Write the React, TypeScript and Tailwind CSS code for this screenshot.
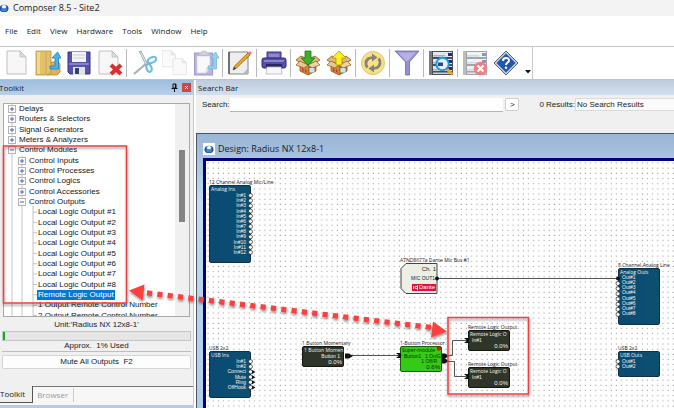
import type { ReactNode } from 'react';

const menus = ['File', 'Edit', 'View', 'Hardware', 'Tools', 'Window', 'Help'];

type TreeRow = { text: string; level: number; open?: boolean; selected?: boolean };

const treeRows: TreeRow[] = [
  { text: 'Delays', level: 0 },
  { text: 'Routers & Selectors', level: 0 },
  { text: 'Signal Generators', level: 0 },
  { text: 'Meters & Analyzers', level: 0 },
  { text: 'Control Modules', level: 0, open: true },
  { text: 'Control Inputs', level: 1 },
  { text: 'Control Processes', level: 1 },
  { text: 'Control Logics', level: 1 },
  { text: 'Control Accessories', level: 1 },
  { text: 'Control Outputs', level: 1, open: true },
  { text: 'Local Logic Output #1', level: 2 },
  { text: 'Local Logic Output #2', level: 2 },
  { text: 'Local Logic Output #3', level: 2 },
  { text: 'Local Logic Output #4', level: 2 },
  { text: 'Local Logic Output #5', level: 2 },
  { text: 'Local Logic Output #6', level: 2 },
  { text: 'Local Logic Output #7', level: 2 },
  { text: 'Local Logic Output #8', level: 2 },
  { text: 'Remote Logic Output', level: 2, selected: true },
  { text: '1 Output Remote Control Number', level: 2 },
  { text: '2 Output Remote Control Number', level: 2 },
];

const AppLogo = ({ className }: { className: string }) => (
  <svg viewBox="0 0 12 12" className={className} aria-hidden="true">
    <ellipse cx="6" cy="6.5" rx="5.4" ry="4.4" fill="#1d4f9c" />
    <ellipse cx="6" cy="7.6" rx="3.6" ry="2.6" fill="#3d83d6" />
    <ellipse cx="6" cy="4.4" rx="3" ry="2" fill="#dcebfa" />
    <rect x="5" y="2.6" width="2" height="3.4" fill="#fff" />
  </svg>
);

const Page = ({ x = 0, y = 0, s = 1 }: { x?: number; y?: number; s?: number }) => (
  <g transform={`translate(${x} ${y}) scale(${s})`}>
    <path d="M3 1h13l6 6v17H3z" fill="#f7f7f8" stroke="#b9b9bd" strokeWidth="0.9" />
    <path d="M16 1v6h6z" fill="#dcdce0" stroke="#b9b9bd" strokeWidth="0.7" />
  </g>
);

const Box = () => (
  <>
    <path d="M1 10l5-4 7 3 7-3 5 4-5 3H6z" fill="#e5b878" stroke="#8a5a22" strokeWidth="0.8" />
    <path d="M5 12l8 3 8-3v9l-8 4-8-4z" fill="#cf8a3c" stroke="#8a5a22" strokeWidth="0.8" />
    <path d="M13 15v10l8-4v-9z" fill="#b06c26" />
    <path d="M1 15l4-4 8 4-4 3z" fill="#eac893" stroke="#8a5a22" strokeWidth="0.7" />
    <path d="M25 15l-4-4-8 4 4 3z" fill="#f0d3a4" stroke="#8a5a22" strokeWidth="0.7" />
    <rect x="14.5" y="18" width="5" height="4.5" fill="#bfe7f6" />
    <path d="M7 18l1.500 1 0 3-1.500-1zM10 19l1.500 1 0 3-1.500-1z" fill="#e0301e" />
  </>
);

const Rack = ({ faded = false }: { faded?: boolean }) => (
  <g opacity={faded ? 0.5 : 1}>
    <rect x="1" y="1" width="24" height="24" fill="#4b4e55" />
    <rect x="1" y="1" width="3" height="24" fill="#777b82" />
    {[2, 9, 16].map((y) => (
      <g key={y}>
        <rect x="5" y={y} width="19" height="5" fill="#e2e6ee" />
        <rect x="5" y={y + 3} width="12" height="1.5" fill="#9fb4d4" />
        <rect x="20" y={y + 1} width="4" height="3" fill="#1c2c86" />
      </g>
    ))}
    <rect x="5" y="22.500" width="19" height="1.500" fill="#c9cdd4" />
  </g>
);

const UpArrow = () => (
  <path d="M15 16h5V8h-3l5.500-6L26 8h-2.500v11H15z" fill="#4cb2ea" stroke="#1f7fc0" strokeWidth="0.8" />
);

const tools: (null | { label: string; art: ReactNode })[] = [
  { label: 'New', art: <Page /> },
  {
    label: 'Open',
    art: (
      <>
        <path d="M15 12h8a3 3 0 0 1 2 3v7l-3 3H12z" fill="#dcb453" stroke="#a97f25" strokeWidth="0.7" />
        <path d="M1 1h15v22l-4 2H1z" fill="#e3c06a" stroke="#b08a35" strokeWidth="0.7" />
        <path d="M2 2h3v22H2z" fill="#efd894" />
        <path d="M11 2v22" stroke="#c59a3c" strokeWidth="0.7" />
        <UpArrow />
      </>
    ),
  },
  {
    label: 'Save',
    art: (
      <>
        <path d="M2 2h22v22H4l-2-2z" fill="#5953ac" stroke="#393386" strokeWidth="1" />
        <rect x="6" y="2" width="14" height="10" fill="#f4f6fb" />
        <path d="M7 5h12M7 8h12" stroke="#c4cbdd" />
        <rect x="3" y="13" width="20" height="2" fill="#8680d0" />
        <rect x="7" y="17" width="12" height="8" fill="#dfe4ea" />
        <rect x="9" y="18" width="4" height="6" fill="#34446a" />
      </>
    ),
  },
  {
    label: 'Delete',
    art: (
      <>
        <Page x={-1} />
        <path d="M14 15l10 9M24 15l-10 9" stroke="#d9302f" strokeWidth="4" />
      </>
    ),
  },
  null,
  {
    label: 'Cut',
    art: (
      <g fill="none">
        <path d="M3 24l14-12" stroke="#a3b3bb" strokeWidth="2.200" />
        <path d="M9 1l7 14" stroke="#8fa2ac" strokeWidth="2.600" />
        <path d="M9.500 2l6 12" stroke="#dce4e8" strokeWidth="1.200" />
        <ellipse cx="21" cy="10" rx="4.500" ry="2.600" transform="rotate(-25 21 10)" stroke="#70bbe6" strokeWidth="2" />
        <ellipse cx="18" cy="18" rx="2.500" ry="4" transform="rotate(-20 18 18)" stroke="#70bbe6" strokeWidth="2" />
      </g>
    ),
  },
  {
    label: 'Copy',
    art: (
      <g opacity="0.55">
        <Page x={-2} y={0} s={0.7} />
        <Page x={9} y={8} s={0.7} />
      </g>
    ),
  },
  {
    label: 'Paste',
    art: (
      <g opacity="0.6">
        <rect x="1.500" y="3" width="18" height="22" fill="#8d87c6" stroke="#625aa8" />
        <path d="M4 6h13v12l-4 5H4z" fill="#f6f6fb" stroke="#aaa5cf" strokeWidth="0.6" />
        <path d="M13 23v-5h4z" fill="#c9c9da" />
        <path d="M6 5V3h3V1h4v2h3v2z" fill="#b8b8c4" stroke="#8a8a9c" strokeWidth="0.6" />
        <UpArrow />
      </g>
    ),
  },
  null,
  {
    label: 'Properties',
    art: (
      <>
        <path d="M2 2h19v22H2z" fill="#eeeeef" stroke="#85868a" strokeWidth="1" />
        <path d="M2 24V2" stroke="#555" strokeWidth="1.500" />
        <path d="M16 24l5-6v6z" fill="#b5b6ba" />
        <path d="M6 20l1.500-4L21 3l2 2L9.500 18z" fill="#f2a91e" stroke="#7b4c10" strokeWidth="0.7" />
        <path d="M21 3l2-2 2 2-2 2z" fill="#e7798a" />
        <path d="M6 20l1.200-3 1.800 1.500z" fill="#333" />
      </>
    ),
  },
  null,
  {
    label: 'Print',
    art: (
      <>
        <path d="M6 2h14v7H6z" fill="#6e68ba" stroke="#37317f" />
        <rect x="8" y="4" width="10" height="3" fill="#8f8ad0" />
        <rect x="1" y="8" width="24" height="10" rx="2" fill="#554fa8" stroke="#332d78" />
        <rect x="3" y="10" width="20" height="2" fill="#8a85cf" />
        <rect x="5" y="14" width="16" height="3" fill="#2b2663" />
        <path d="M6 17h14l1 7H5z" fill="#f6f7f8" stroke="#b4b6bd" strokeWidth="0.8" />
      </>
    ),
  },
  null,
  {
    label: 'Receive from device',
    art: (
      <>
        <Box />
        <path d="M10 1h6v7h4l-7 7-7-7h4z" fill="#3fae2c" stroke="#1f7a14" strokeWidth="0.8" />
      </>
    ),
  },
  {
    label: 'Send to device',
    art: (
      <>
        <Box />
        <path d="M10 15h6V8h4l-7-7-7 7h4z" fill="#fdf01b" stroke="#a89a12" strokeWidth="0.8" />
      </>
    ),
  },
  null,
  {
    label: 'Refresh',
    art: (
      <>
        <circle cx="13" cy="13" r="11.500" fill="#f8e083" stroke="#dcc377" />
        <path d="M7.500 17.500a6 6 0 0 1 1-9l4-1" fill="none" stroke="#85837a" strokeWidth="2.800" />
        <path d="M12 3.500l5.500 4-5.500 4z" fill="#85837a" />
        <path d="M18.500 8.500a6 6 0 0 1-1 9l-4 1" fill="none" stroke="#85837a" strokeWidth="2.800" />
        <path d="M14 22.500l-5.500-4 5.500-4z" fill="#85837a" />
      </>
    ),
  },
  null,
  {
    label: 'Filter',
    art: (
      <>
        <path d="M1 1h24l-9.500 11v13h-4V12z" fill="#958fd3" stroke="#6e67b3" strokeWidth="0.8" />
        <path d="M4 2.500h18L14 11h-2z" fill="#b5b1e3" />
      </>
    ),
  },
  null,
  {
    label: 'Find device',
    art: (
      <>
        <Rack />
        <path d="M19 19l5.500 5.500" stroke="#f0a32b" strokeWidth="3" />
        <circle cx="14.500" cy="14" r="6.200" fill="#e4f4fc" stroke="#2196d8" strokeWidth="2" />
        <path d="M10 12.500h5v3.500h-5z" fill="#33448e" />
      </>
    ),
  },
  null,
  {
    label: 'Remove device',
    art: (
      <>
        <Rack faded />
        <circle cx="18.500" cy="18.500" r="6.800" fill="#f27d80" />
        <path d="M15.500 15.500l6 6M21.500 15.500l-6 6" stroke="#fff" strokeWidth="2.400" />
      </>
    ),
  },
  {
    label: 'Help',
    art: (
      <>
        <path d="M13 1l12 12-12 12L1 13z" fill="#c3ccd6" stroke="#566375" />
        <path d="M13 3.500l9.500 9.500-9.500 9.500L3.500 13z" fill="#1f57b0" />
        <path d="M10 11c0-4 6-4 6-.5 0 2-3 2-3 4.500" fill="none" stroke="#fff" strokeWidth="2" />
        <circle cx="13" cy="17.800" r="1.200" fill="#fff" />
      </>
    ),
  },
];

const Toolbar = () => (
  <div className="flex h-[34px] items-center border-y border-[#c3c3c3] bg-white">
    <div className="flex h-full items-center gap-[5px] border-r border-[#c9c9c9] pl-1">
      {tools.map((tool, i) =>
        tool ? (
          <button key={tool.label} type="button" aria-label={tool.label} className="w-[26px]">
            <svg viewBox="0 0 26 26" className="size-[26px]" aria-hidden="true">
              {tool.art}
            </svg>
          </button>
        ) : (
          <span key={i} className="-mr-px -ml-[2px] h-7 w-0 border-l border-[#b9b9b9]" />
        ),
      )}
      <svg viewBox="0 0 8 26" className="h-[26px] w-2" aria-hidden="true">
        <path d="M1 20h6l-3 3.500z" fill="#111" />
      </svg>
    </div>
  </div>
);

const ExpandBox = ({ open = false }: { open?: boolean }) => (
  <svg viewBox="0 0 8 8" className="size-2 shrink-0" aria-hidden="true">
    <rect x="0.5" y="0.5" width="7" height="7" fill="#fafafa" stroke="#b3b3b3" />
    <path d={open ? 'M2 4h4' : 'M2 4h4M4 2v4'} stroke="#5567a8" />
  </svg>
);

const Toolkit = () => (
  <aside className="flex w-[194px] shrink-0 flex-col border-r border-[#c9c9c9] bg-[#f0f0f0]">
    <div className="flex h-[15px] shrink-0 items-center bg-linear-to-b from-[#9fbddd] to-[#b7cfe9] pr-[2px]">
      <h2 className="-ml-px flex-1 font-[Open_Sans,sans-serif] text-[8px] text-[#1a1a1a]">Toolkit</h2>
      <button type="button" aria-label="Pin" className="mr-1">
        <svg viewBox="0 0 7 9" className="h-[9px] w-[7px]" aria-hidden="true">
          <path d="M2 1h3v4H2zM0.500 5.500h6M3.500 6v3M4.500 1v4" fill="none" stroke="#111" />
        </svg>
      </button>
      <button type="button" aria-label="Close" className="flex size-[9px] items-center justify-center bg-[#c64a4a]">
        <svg viewBox="0 0 5 5" className="size-[3px]" aria-hidden="true">
          <path d="M0 0l5 5M5 0L0 5" stroke="#fff" strokeWidth="1.500" />
        </svg>
      </button>
    </div>

    <div className="mx-[3px] mt-2 flex min-h-0 flex-1 overflow-hidden border border-[#a9a9a9] bg-white">
      <div className="relative min-w-0 flex-1 overflow-hidden">
        <svg className="absolute inset-0 h-full w-full" aria-hidden="true">
          <path d="M8 0v216M18 52v164M29 102v114" stroke="#c4c4c4" fill="none" />
          {Array.from({ length: 11 }, (_, i) => (
            <path key={i} d={`M29 ${108 + i * 10.35}h4`} stroke="#c4c4c4" />
          ))}
        </svg>
        <ul className="relative flex h-[217px] flex-col text-[8px] leading-[10px] text-[#161616]">
          {treeRows.map((row) => (
            <li
              key={row.text}
              className={`flex flex-1 items-center gap-[2px] whitespace-nowrap ${
                row.level === 0 ? 'pl-1' : row.level === 1 ? 'pl-[14px]' : 'pl-[33px]'
              }`}
            >
              {row.level < 2 && <ExpandBox open={row.open} />}
              <span className={row.selected ? 'bg-[#0078d7] px-px text-white' : 'px-px'}>{row.text}</span>
            </li>
          ))}
        </ul>
      </div>
      <div className="w-[14px] shrink-0 bg-[#f0f0f0] px-1 pt-[46px]">
        <div className="h-[72px] bg-[#858585]" />
      </div>
    </div>

    <div className="flex shrink-0 flex-col px-[2px] pt-[3px] text-center text-[8px] leading-[10px] text-[#1a1a1a]">
      <p>Unit:'Radius NX 12x8-1'</p>
      <div className="mt-px h-[10px] border border-[#c6c6c6] bg-[#e6e6e6]">
        <div className="h-full w-[2px] bg-[#06b025]" />
      </div>
      <p className="border-b border-[#bdbdbd] whitespace-pre">Approx.  1% Used</p>
      <button type="button" className="mt-[3px] h-[14px] rounded-xs border border-[#d5d5d5] bg-[#fdfdfd] whitespace-pre">
        Mute All Outputs  F2
      </button>
    </div>

    <div className="mt-[17px] flex h-[19px] shrink-0 bg-[#f7f7f7] font-[Open_Sans,sans-serif] text-[8px]">
      <button type="button" className="h-[17px] border-r border-b border-[#555] bg-[#f0f0f0] pr-[7px] text-[#1a1a1a]">
        Toolkit
      </button>
      <div className="flex flex-1 border-t border-[#777]">
        <button type="button" className="mt-px mb-[3px] border-r border-[#ccc] pr-[5px] pl-1 text-[#9a9a9a]">
          Browser
        </button>
      </div>
    </div>
    <div className="h-[3px] shrink-0 bg-[#b9cbe0]" />
  </aside>
);

const SearchBar = () => (
  <section className="shrink-0 bg-[#f0f0f0]">
    <h2 className="flex h-[15px] items-center bg-linear-to-b from-[#bfccdd] to-[#d4e0ee] pl-[2px] font-[Open_Sans,sans-serif] text-[8px] text-[#1a1a1a]">
      Search Bar
    </h2>
    <div className="flex h-[38px] items-start pt-[3px] pl-[6px] text-[8px] leading-[13px] text-[#1a1a1a]">
      <label htmlFor="search">Search:</label>
      <input id="search" className="h-[14px] min-w-0 flex-1 border-b border-[#b5b5b5] bg-white px-1 outline-none" />
      <button type="button" aria-label="Search" className="ml-[2px] h-[13px] w-[14px] rounded-xs border border-[#d0d0d0] bg-white leading-[10px]">
        &gt;
      </button>
      <label htmlFor="results" className="ml-5">
        0 Results:
      </label>
      <input
        id="results"
        readOnly
        defaultValue="No Search Results"
        className="h-[13px] w-[99px] border border-r-0 border-[#dadada] bg-[#fafafa] pl-px outline-none"
      />
    </div>
  </section>
);

type NodeProps = {
  caption: string;
  title?: string;
  place: string;
  body: string;
  children: ReactNode;
};

const DesignNode = ({ caption, title, place, body, children }: NodeProps) => (
  <div className={`absolute text-[5px] leading-[6px] whitespace-nowrap ${place}`}>
    <p className="h-[6px] w-0 font-[Open_Sans,sans-serif] text-[#222]">{caption}</p>
    <div className={`flex flex-col ${body}`}>
      {title && <p className="pl-px font-[Open_Sans,sans-serif]">{title}</p>}
      {children}
    </div>
  </div>
);

const Pins = ({ names, className }: { names: string[]; className: string }) => (
  <ul className={`flex flex-col justify-between leading-[5px] ${className}`}>
    {names.map((name) => (
      <li key={name}>{name}</li>
    ))}
  </ul>
);

const numbered = (prefix: string, count: number) => Array.from({ length: count }, (_, i) => `${prefix}${i + 1}`);

const blueBody = 'w-[42px] rounded-xs border border-[#123043] bg-linear-to-r from-[#0a4a73] to-[#0c5071] text-[#f2f2f2]';
const darkBody = 'w-[42px] h-[21px] rounded-xs border border-[#14170d] bg-[#30352a] text-[#f2f2f2]';

const openPorts = [
  ...Array.from({ length: 12 }, (_, i) => [44.5, 34.5 + i * 5.17]),
  ...Array.from({ length: 6 }, (_, i) => [44.5, 200.5 + i * 5.17]),
  ...Array.from({ length: 7 }, (_, i) => [412, 122.5 + i * 5.17]),
  [412, 200.5],
  [412, 205.5],
];

const Canvas = () => (
  <div className="relative min-h-0 flex-1 overflow-hidden bg-white">
    <svg className="absolute inset-0 h-full w-full" aria-hidden="true">
      <defs>
        <pattern id="grid" width="5.17" height="5.17" patternUnits="userSpaceOnUse">
          <rect x="1.500" y="1.500" width="1" height="1" fill="#8c8c8c" />
        </pattern>
      </defs>
      <rect width="100%" height="100%" fill="url(#grid)" />
      <path d="M200 102.500h31v30h-31l-5-5v-20z" fill="#edeee4" stroke="#444" />
    </svg>

    <DesignNode caption="12 Channel Analog Mic/Line" title="Analog Ins" place="left-[3px] top-[18px]" body={`${blueBody} h-[78px]`}>
      <Pins names={numbered('In#', 12)} className="mt-px h-[62px] pr-1 text-right" />
    </DesignNode>
    <DesignNode caption="USB 2x2" title="USB Ins" place="left-[3px] top-[184px]" body={`${blueBody} h-[47px]`}>
      <Pins names={['In#1', 'In#2', 'Connect', 'Mute', 'Ring', 'OffHook']} className="mt-px h-[31px] pr-1 text-right" />
    </DesignNode>
    <DesignNode caption="1 Button Momentary" title="1 Button Momen" place="left-[96px] top-[179px]" body={darkBody}>
      <p className="mt-px pr-[3px] text-right leading-[5px]">Button 1</p>
      <p className="pr-px text-right text-[6px]">0.0%</p>
    </DesignNode>
    <DesignNode
      caption="1-Button Processor"
      title="Super-module"
      place="left-[194px] top-[179px]"
      body="h-[26px] w-[42px] rounded-xs border border-[#1b5b0e] bg-[#35ca16] text-[#072a02]"
    >
      <div className="mt-px flex justify-between pl-[3px] leading-[5px]">
        <span>Button1</span>
        <span>1 On/G</span>
      </div>
      <p className="pr-1 text-right leading-[5px]">1 Off/R</p>
      <p className="pr-px text-right text-[6px]">0.6%</p>
    </DesignNode>
    <DesignNode
      caption="ATND8677a Dante Mic Bus #1"
      place="left-[194px] top-[96px]"
      body="h-[31px] w-[38px] items-end gap-[3px] pt-[3px] pr-[2px] text-[#222]"
    >
      <span className="text-[6px]">Ch. 1</span>
      <span className="pr-px">MIC OUT1</span>
      <span className="flex items-center gap-px bg-[#e0113a] px-px text-[6px] leading-[7px] text-white">
        <svg viewBox="0 0 5 5" className="size-[5px]" aria-hidden="true">
          <path d="M0.500 1v3M4.500 0v5M4 1.500H2v2h2" fill="none" stroke="#fff" strokeWidth="0.8" />
        </svg>
        Dante
      </span>
    </DesignNode>
    <DesignNode caption="Remote Logic Output" title="Remote Logic O" place="left-[262px] top-[163px]" body={darkBody}>
      <Pins names={['In#1']} className="mt-px pl-[3px]" />
      <p className="pr-px text-right text-[6px]">0.0%</p>
    </DesignNode>
    <DesignNode caption="Remote Logic Output" title="Remote Logic O" place="left-[262px] top-[200px]" body={darkBody}>
      <Pins names={['In#1']} className="mt-px pl-[3px]" />
      <p className="pr-px text-right text-[6px]">0.0%</p>
    </DesignNode>
    <DesignNode caption="8 Channel Analog Line" title="Analog Outs" place="left-[412px] top-[101px]" body={`${blueBody} h-[57px]`}>
      <Pins names={numbered('Out#', 8)} className="h-[41px] pl-[3px]" />
    </DesignNode>
    <DesignNode caption="USB 2x2" title="USB Outs" place="left-[412px] top-[184px]" body={`${blueBody} h-[26px]`}>
      <Pins names={numbered('Out#', 2)} className="mt-px h-[10px] pl-[3px]" />
    </DesignNode>

    <svg className="absolute inset-0 h-full w-full" aria-hidden="true">
      <path
        d="M231 117.500H412M143 194.500H196M237 194.500H246.500V179.500H262M237 200.500H248.500V215.500H262"
        fill="none"
        stroke="#555"
      />
      {openPorts.map(([x, y]) => (
        <circle key={`${x}-${y}`} cx={x} cy={y} r="2" fill="#fff" stroke="#222" strokeWidth="0.7" />
      ))}
      {[0, 1, 2, 3].map((i) => (
        <path key={i} d={`M46 ${209 + i * 5.17}l3.500 2-3.500 2z`} fill="#111" />
      ))}
      <circle cx="231" cy="117.500" r="2" fill="#111" />
      <circle cx="412" cy="117.500" r="2" fill="#111" />
      <path d="M139 192.500h4l4 2.500-4 2.500h-4zM236 192.500h3l4 2.500-4 2.500h-3zM236 197.500h3l4 2.500-4 2.500h-3z" fill="#111" />
      <path d="M190 192l3 2.500-3 2.500h5v-5zM258 177l3 2.500-3 2.500h5v-5zM258 213l3 2.500-3 2.500h5v-5z" fill="#111" />
      <circle cx="233" cy="187.500" r="1.800" fill="#f11" stroke="#700" strokeWidth="0.5" />
    </svg>
  </div>
);

const DesignWindow = () => (
  <section className="flex min-h-0 flex-1 flex-col border-t border-l border-[#4d5560] bg-linear-to-b from-[#9ab6d6] via-[#c3dbf3] via-25% to-[#b0cdea] pl-[6px]">
    <div className="flex h-6 shrink-0 items-center gap-[3px] pt-[6px]">
      <span className="size-3 bg-white p-px">
        <AppLogo className="size-[10px]" />
      </span>
      <h1 className="font-[Open_Sans,sans-serif] text-[9px] leading-[14px] text-[#1a1a1a]">Design: Radius NX 12x8-1</h1>
    </div>
    <div className="flex min-h-0 flex-1 border-t-[3px] border-l-[3px] border-[#000080]">
      <Canvas />
    </div>
  </section>
);

const Annotations = () => (
  <svg className="pointer-events-none absolute inset-0 h-full w-full" aria-hidden="true">
    <defs>
      <filter id="shade" x="-10%" y="-10%" width="120%" height="130%">
        <feDropShadow dx="0.5" dy="2" stdDeviation="1.200" floodOpacity="0.4" />
      </filter>
    </defs>
    <g filter="url(#shade)">
      <rect x="3.500" y="146" width="123" height="157" fill="none" stroke="#f03c3c" strokeWidth="1.500" />
      <rect x="448" y="317.500" width="80.500" height="76.500" fill="none" stroke="#f03c3c" strokeWidth="1.500" />
      <path d="M147 292.900L432 327.500" stroke="#fb4040" strokeWidth="5.200" strokeDasharray="5.200 5.200" />
      <path d="M129 290.500l15.500-6-1.800 16zM447 331.500l-14-10-2 16z" fill="#fb4040" />
    </g>
  </svg>
);

const App = () => {
  return (
    <div className="relative flex h-screen flex-col overflow-hidden bg-white font-[Liberation_Sans,Arial,sans-serif]">
      <header className="flex h-4 shrink-0 items-center gap-1 bg-[#f3f3f3] font-[Open_Sans,sans-serif] text-[9px] text-[#222]">
        <AppLogo className="-ml-px size-[10px]" />
        <span>Composer 8.5 - Site2</span>
      </header>
      <nav className="flex h-[30px] shrink-0 items-center gap-[9px] pl-[5px] font-[Open_Sans,sans-serif] text-[8px] text-[#1a1a1a]">
        {menus.map((menu) => (
          <button key={menu} type="button">
            {menu}
          </button>
        ))}
      </nav>
      <Toolbar />
      <main className="flex min-h-0 flex-1 bg-[#f0f0f0]">
        <Toolkit />
        <div className="flex min-w-0 flex-1 flex-col border-l-2 border-white">
          <SearchBar />
          <DesignWindow />
        </div>
      </main>
      <Annotations />
    </div>
  );
};

export default App;
